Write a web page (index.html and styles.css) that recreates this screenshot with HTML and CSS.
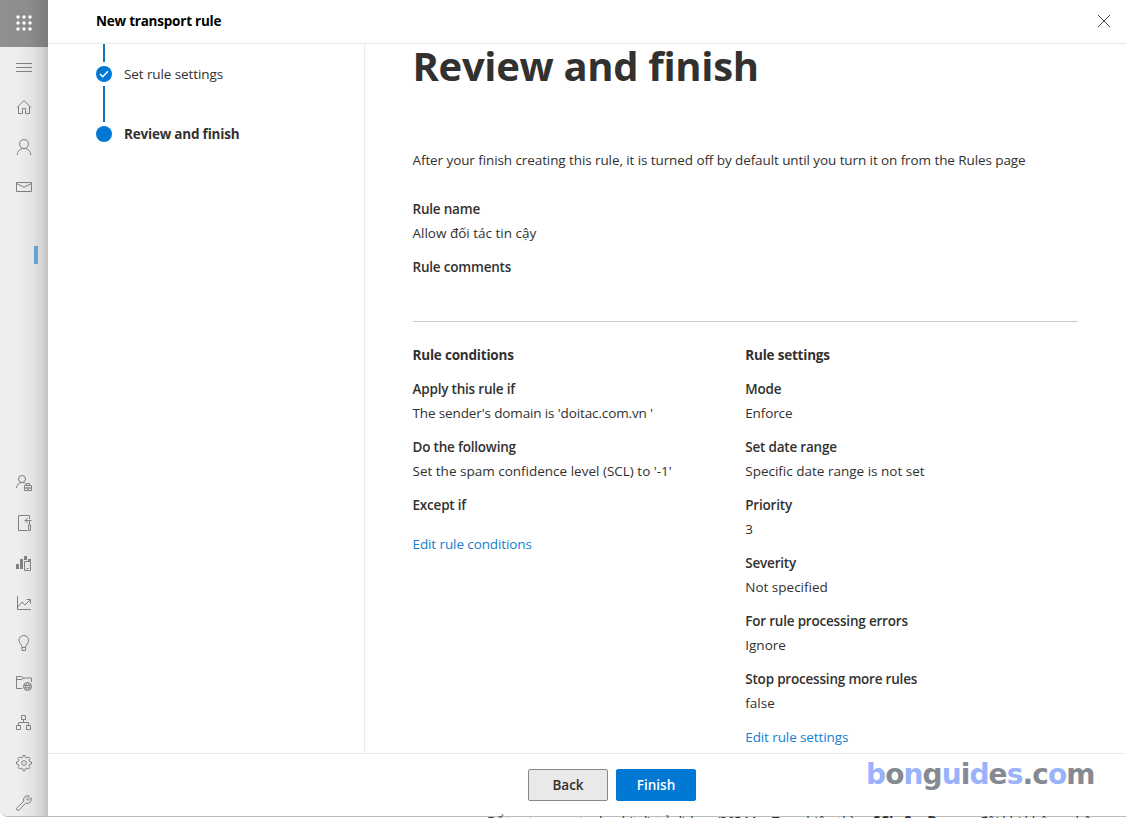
FILE: index.html
```html
<!DOCTYPE html>
<html lang="en">
<head>
<meta charset="utf-8">
<title>New transport rule</title>
<link rel="stylesheet" href="styles.css">
</head>
<body>
<div class="app">
  <nav class="rail">
    <div class="waffle"><svg width="16" height="16" viewBox="0 0 16 16" fill="#fff"><circle cx="2" cy="2" r="1.7"/><circle cx="8" cy="2" r="1.7"/><circle cx="14" cy="2" r="1.7"/><circle cx="2" cy="8" r="1.7"/><circle cx="8" cy="8" r="1.7"/><circle cx="14" cy="8" r="1.7"/><circle cx="2" cy="14" r="1.7"/><circle cx="8" cy="14" r="1.7"/><circle cx="14" cy="14" r="1.7"/></svg></div>
    <div class="item"><svg viewBox="0 0 16 16"><path d="M0 4.500h16M0 8.500h16M0 12.500h16"/></svg></div>
    <div class="item"><svg viewBox="0 0 16 16"><path d="M1 8.500 8 1.500l7 7M2.500 7.500v7h4v-5h3v5h4v-7"/></svg></div>
    <div class="item"><svg viewBox="0 0 16 16"><circle cx="8" cy="5" r="4.500"/><path d="M1.200 16C1.500 12 4 9.500 8 9.500s6.500 2.500 6.800 6.500"/></svg></div>
    <div class="item"><svg viewBox="0 0 16 16"><path d="M.5 3.500h15v9H.5zM.5 4.500 8 8.200l7.500-3.700"/></svg></div>
    <div class="item-gap"><span class="marker"></span></div>
    <div class="item"><svg viewBox="0 0 16 16"><circle cx="6" cy="4" r="3.500"/><path d="M.5 13C1 9.500 3 7.500 6 7.500c1.500 0 2.500.4 3.500 1.200M8.500 10.500h7v5h-7zM10.500 10.500v-2h3v2M8.500 13h7M11 12v2h2v-2"/></svg></div>
    <div class="item"><svg viewBox="0 0 16 16"><path d="M13.500 4V.5h-11v15h9M15.500 5.500H9M11.500 3 9 5.500 11.500 8M13.500 5.500V10M12.500 10h2v5.500h-2z"/></svg></div>
    <div class="item"><svg viewBox="0 0 16 16"><path fill="#808080" stroke="none" d="M0 9h3v5H0zM4 4h3v10H4zM8 1h3v4H8zM12 4h3v2h-3z"/><path d="M8.500 6.500h6v9h-6zM10.500 13.500h2"/></svg></div>
    <div class="item"><svg viewBox="0 0 16 16"><path d="M1.500 1v13.500H15M2 12l4-5 3 3 5.500-5.500M10.500 4.500h4v4"/></svg></div>
    <div class="item"><svg viewBox="0 0 16 16"><path d="M6 12.500C6 9.500 3 8.500 3 5.300a4.800 4.800 0 0 1 9.600 0c0 3.200-3 4.200-3 7.200zM6 12.500v3h3.600v-3"/></svg></div>
    <div class="item"><svg viewBox="0 0 16 16"><path d="M6 13.500H.5v-12h5l1.500 1.500h8.500v4M.5 4.500H6L7.500 3"/><circle cx="11.500" cy="11.500" r="4"/><path d="M7.500 10.500h8M7.500 12.800h8M11.500 7.500c-2.400 2.500-2.400 5.500 0 8M11.500 7.500c2.400 2.500 2.400 5.500 0 8"/></svg></div>
    <div class="item"><svg viewBox="0 0 16 16"><path d="M5.500.5h4v4h-4zM.5 10.500h4v4h-4zM10.500 10.500h4v4h-4zM7.500 4.500v3M2.500 10.500v-3h10v3"/></svg></div>
    <div class="item"><svg viewBox="0 0 16 16"><path d="M6.600 2.300 7 .5h2l.4 1.800 1.500.6 1.600-1 1.500 1.500-1 1.600.6 1.500 1.900.5v2l-1.900.4-.6 1.500 1 1.600-1.500 1.500-1.600-1-1.500.6L9 15.500H7l-.4-1.900-1.500-.6-1.600 1L2 12.500l1-1.600-.6-1.500L.5 9V7l1.900-.5L3 5 2 3.400l1.500-1.500 1.600 1z"/><circle cx="8" cy="8" r="2.300"/></svg></div>
    <div class="item"><svg viewBox="0 0 16 16"><path d="M14.900 2.700a4.100 4.100 0 0 1-5.300 5.500L3.300 15a1.600 1.600 0 0 1-2.300-2.300l6.800-6.300a4.100 4.100 0 0 1 5.500-5.300L10.800 3.600l.3 1.300 1.300.3z"/></svg></div>
  </nav>
  <main class="panel">
    <header class="header">
      <span class="title">New transport rule</span>
      <svg width="14" height="14" viewBox="0 0 14 14" fill="none" stroke="#484644"><path d="m1 1 12 12M13 1 1 13"/></svg>
    </header>
    <div class="body">
      <aside class="steps">
        <div class="line line-top"></div>
        <div class="step"><svg class="dot" viewBox="0 0 16 16"><circle cx="8" cy="8" r="8" fill="#0078d4"/><path d="m4 8 2.700 2.700L12 5.300" fill="none" stroke="#fff" stroke-width="1.500"/></svg><span class="step-label">Set rule settings</span></div>
        <div class="line line-mid"></div>
        <div class="step"><svg class="dot" viewBox="0 0 16 16"><circle cx="8" cy="8" r="8" fill="#0078d4"/></svg><span class="step-label current">Review and finish</span></div>
      </aside>
      <section class="content">
        <h1 class="heading">Review and finish</h1>
        <p class="intro">After your finish creating this rule, it is turned off by default until you turn it on from the Rules page</p>
        <dl class="fields summary">
          <dt>Rule name</dt><dd>Allow đối tác tin cậy</dd>
          <dt>Rule comments</dt>
        </dl>
        <div class="columns">
          <div class="column">
            <h2 class="subhead">Rule conditions</h2>
            <dl class="fields">
              <dt>Apply this rule if</dt><dd class="tight">The sender's domain is 'doitac.com.vn '</dd>
              <dt>Do the following</dt><dd>Set the spam confidence level (SCL) to '-1'</dd>
              <dt>Except if</dt>
            </dl>
            <a class="link link-conditions">Edit rule conditions</a>
          </div>
          <div class="column">
            <h2 class="subhead">Rule settings</h2>
            <dl class="fields">
              <dt>Mode</dt><dd class="tight">Enforce</dd>
              <dt>Set date range</dt><dd>Specific date range is not set</dd>
              <dt>Priority</dt><dd>3</dd>
              <dt>Severity</dt><dd>Not specified</dd>
              <dt>For rule processing errors</dt><dd>Ignore</dd>
              <dt>Stop processing more rules</dt><dd>false</dd>
            </dl>
            <a class="link">Edit rule settings</a>
          </div>
        </div>
      </section>
    </div>
    <footer class="footer">
      <button class="btn">Back</button>
      <button class="btn primary">Finish</button>
    </footer>
  </main>
</div>
<div class="underlay"><span>Để tạo transport rule whitelist ở dịch vụ/365 M...</span><span>Tuy nhiên thì</span><b>SCL: SexDrop</b><span>đôi khi không nhận</span></div>
<div class="watermark"><i>b</i>o<i>n</i>g<i>u</i>i<i>d</i>e<i>s</i>.c<i>o</i>m</div>
</body>
</html>
```

FILE: styles.css
```css
* { box-sizing: border-box; }
body {
  margin: 0;
  width: 1126px;
  height: 818px;
  overflow: hidden;
  position: relative;
  background: #fff;
  color: #323130;
  font: 13.5px/20px "Open Sans", "Noto Sans", sans-serif;
}
.app {
  display: flex;
  height: 817px;
  border-bottom: 1px solid #bcbcbc;
  border-bottom-left-radius: 8px;
  overflow: hidden;
}
.rail {
  width: 48px;
  flex: none;
  display: flex;
  flex-direction: column;
  background: linear-gradient(90deg, #efefef 0, #ededed 40%, #e3e3e3 68%, #d5d5d5 86%, #c2c2c2 100%);
}
.waffle {
  height: 47px;
  flex: none;
  padding: 15px 0 0 16px;
  background: linear-gradient(90deg, #929190, #8d8c8b 60%, #7c7b7a);
}
.waffle svg { display: block; }
.item {
  height: 40px;
  flex: none;
  display: flex;
  align-items: center;
  padding-left: 16px;
}
.item svg {
  width: 16px;
  height: 16px;
  fill: none;
  stroke: #808080;
  overflow: visible;
}
.item-gap { height: 256px; flex: none; padding: 39px 0 0 34px; }
.marker { display: block; width: 4px; height: 18px; background: #62a3d2; }
.panel { flex: 1; display: flex; flex-direction: column; background: #fff; }
.header {
  height: 44px;
  display: flex;
  align-items: center;
  justify-content: space-between;
  padding: 0 15px 2px 48px;
  border-bottom: 1px solid #e6e8e8;
}
.title { color: #000; font-weight: 700; letter-spacing: -0.22px; }
.body { height: 709px; display: flex; overflow: hidden; }
.steps { width: 317px; padding-left: 48px; border-right: 1px solid #eaeaea; }
.line { width: 2px; margin-left: 7px; background: #0f78b8; }
.line-top { height: 18px; margin-bottom: 2px; }
.line-mid { height: 36px; margin: 2px 0 2px 7px; }
.step { display: flex; align-items: center; height: 20px; }
.dot { width: 16px; height: 16px; }
.step-label { margin-left: 12px; letter-spacing: -0.1px; }
.current { font-weight: 700; letter-spacing: -0.2px; }
.content { flex: 1; padding: 0 48px 0 47.5px; }
.heading {
  margin: 0 0 62px;
  height: 44px;
  font-size: 40px;
  line-height: 44px;
  font-weight: 700;
  letter-spacing: -0.33px;
  white-space: nowrap;
}
.intro { margin: 0 0 29px; letter-spacing: -0.09px; white-space: nowrap; }
.fields { margin: 0; }
.fields dt { font-weight: 600; letter-spacing: -0.2px; }
.fields dd { margin: 4px 0 14px; }
.fields .tight { letter-spacing: -0.13px; }
.summary { height: 123px; border-bottom: 1px solid #c8c8c8; }
.columns { display: grid; grid-template-columns: 1fr 1fr; padding-top: 23px; }
.column { white-space: nowrap; }
.subhead { margin: 0 0 14px; font-size: inherit; line-height: 20px; font-weight: 700; letter-spacing: -0.2px; }
.link { display: block; color: #1480d0; letter-spacing: -0.1px; }
.link-conditions { margin-top: 19px; }
.footer {
  flex: 1;
  display: flex;
  gap: 8px;
  padding: 15px 0 0 480px;
  border-top: 1px solid #e9ebec;
}
.btn {
  width: 80px;
  height: 32px;
  padding: 0;
  border: 1px solid #8a8886;
  border-radius: 2px;
  background: #e9e9e9;
  color: #323130;
  font: 600 13.5px/20px "Open Sans", sans-serif;
}
.primary { background: #0078d4; border-color: #0078d4; color: #fff; }
.underlay {
  position: absolute;
  left: 487px;
  top: 811px;
  display: grid;
  grid-template-columns: 285px 101px 106px auto;
  white-space: nowrap;
  color: #30343c;
  font-size: 13.5px;
}
.underlay span:first-child { letter-spacing: -0.5px; }
.watermark {
  position: absolute;
  left: 866px;
  top: 759px;
  color: #858a92;
  font: 700 28px/32px "DejaVu Sans", sans-serif;
  letter-spacing: -0.9px;
  white-space: nowrap;
}
.watermark i { font-style: normal; color: #98b2fb; }
```
